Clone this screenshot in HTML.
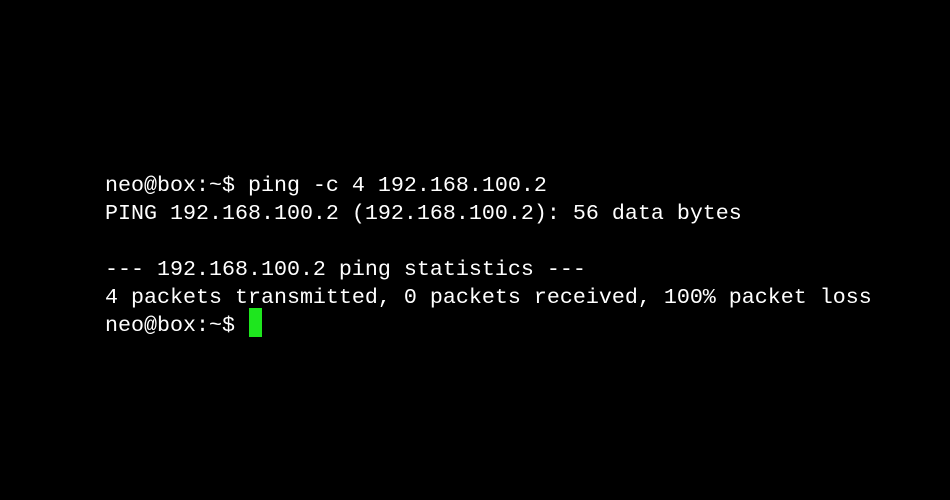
<!DOCTYPE html>
<html><head><style>
html,body{margin:0;padding:0;background:#000;width:950px;height:500px;overflow:hidden}
pre{position:absolute;left:105px;top:172px;margin:0;font-family:"Liberation Mono",monospace;font-size:21.67px;line-height:28px;color:#fff}
.c{position:absolute;left:249px;top:308px;width:13px;height:29px;background:#1ee61e}
</style></head><body>
<pre>neo@box:~$ ping -c 4 192.168.100.2
PING 192.168.100.2 (192.168.100.2): 56 data bytes

--- 192.168.100.2 ping statistics ---
4 packets transmitted, 0 packets received, 100% packet loss
neo@box:~$ </pre>
<div class="c"></div>
</body></html>
